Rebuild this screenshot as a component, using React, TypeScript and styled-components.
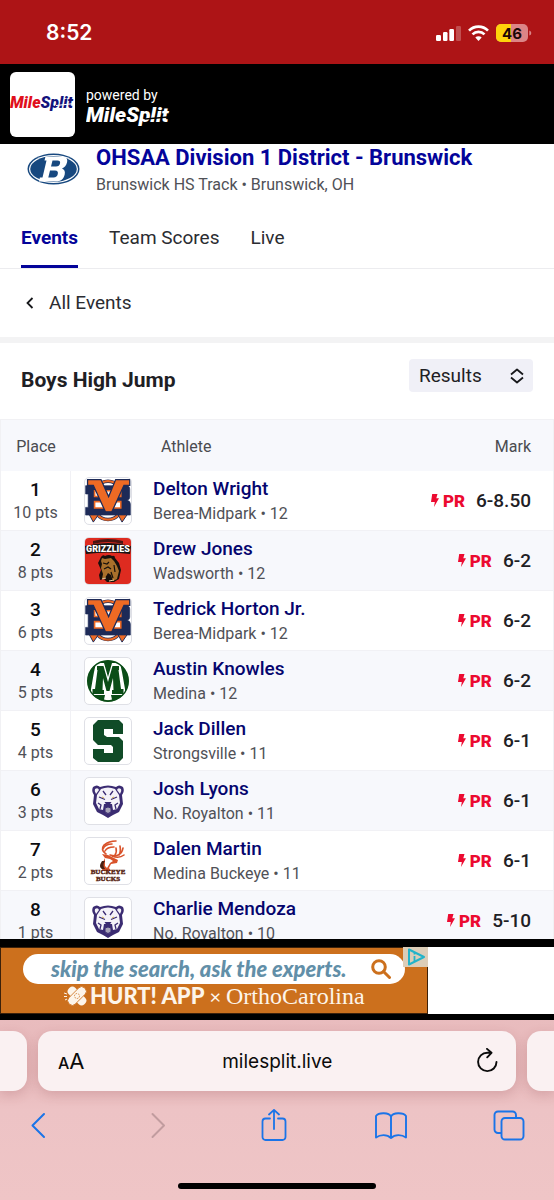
import React from "react";
import styled, { createGlobalStyle } from "styled-components";

const GlobalStyle = createGlobalStyle`
  * { box-sizing: border-box; }
  body { margin: 0; font-family: Roboto, sans-serif; color: #1e2024; background: #fff; }
  button, select, input { font: inherit; color: inherit; border: 0; background: none; padding: 0; margin: 0; }
  a { color: inherit; text-decoration: none; }
  svg { display: block; flex: none; }
  h1, h2, p { margin: 0; }
`;

const Shell = styled.div`
  display: flex;
  flex-direction: column;
  height: 100vh;
  overflow: hidden;
`;

const StatusBar = styled.div`
  display: flex;
  flex: none;
  align-items: center;
  justify-content: space-between;
  height: 64px;
  padding: 2px 22px 0 46px;
  background: #ad1416;
  color: #fff;
`;

const Clock = styled.time`
  font: 600 21px/24px Inter, sans-serif;
`;

const StatusIcons = styled.div`
  display: flex;
  align-items: center;
  gap: 7px;
`;

const BrandBar = styled.header`
  display: flex;
  flex: none;
  align-items: center;
  gap: 11px;
  height: 80px;
  padding: 0 10px;
  background: #000;
  color: #fff;
`;

const BrandTile = styled.a`
  display: flex;
  align-items: center;
  justify-content: center;
  width: 65px;
  height: 65px;
  border-radius: 6px;
  background: #fff;
`;

const BrandText = styled.div`
  display: flex;
  flex-direction: column;
  padding-top: 8px;
  font-size: 14px;
  line-height: 16px;
`;

const Content = styled.main`
  flex: 1;
  min-height: 0;
  overflow: hidden;
`;

const MeetHeader = styled.section`
  display: flex;
  gap: 16px;
  height: 64px;
  padding: 0 27px;
`;

const MeetCrest = styled.div`
  padding-top: 8px;
`;

const MeetTitle = styled.h1`
  font-size: 22px;
  line-height: 28px;
  font-weight: 700;
  color: #04049a;
  white-space: nowrap;
`;

const MeetPlace = styled.p`
  font-size: 16px;
  line-height: 26px;
  color: #505157;
`;

const Tabs = styled.nav`
  display: flex;
  gap: 31px;
  height: 61px;
  padding: 0 21px;
  border-bottom: 1px solid #ececef;
`;

const Tab = styled.a<{ $active?: boolean }>`
  height: 60px;
  padding-top: 18px;
  font-size: 19px;
  line-height: 24px;
  font-weight: ${(p) => (p.$active ? 700 : 400)};
  color: ${(p) => (p.$active ? "#04049a" : "#2b2c31")};
  border-bottom: 3px solid ${(p) => (p.$active ? "#04049a" : "transparent")};
`;

const BackLink = styled.a`
  display: flex;
  align-items: center;
  gap: 15px;
  height: 68px;
  padding: 0 26px;
  font-size: 19px;
  line-height: 24px;
  color: #2b2c31;
`;

const EventBar = styled.section`
  display: flex;
  justify-content: space-between;
  height: 83px;
  padding: 16px 21px 0;
  border-top: 6px solid #f3f3f4;
  border-bottom: 1px solid #f1f1f4;
`;

const EventTitle = styled.h2`
  padding-top: 9px;
  font-size: 21px;
  line-height: 24px;
  font-weight: 700;
`;

const SelectWrap = styled.div`
  position: relative;
  width: 124px;
  height: 33px;
`;

const ViewSelect = styled.select`
  appearance: none;
  width: 100%;
  height: 100%;
  padding: 0 10px;
  border-radius: 4px;
  background: #f0f0f7;
  font-size: 19px;
`;

const SelectArrows = styled.svg`
  position: absolute;
  right: 9px;
  top: 9px;
  pointer-events: none;
`;

const ResultsTable = styled.table`
  width: 100%;
  border-collapse: separate;
  border-spacing: 0;
  table-layout: fixed;
  border-left: 1px solid #f1f1f4;
  border-right: 1px solid #f1f1f4;
`;

const HeadCell = styled.th<{ $align?: string }>`
  height: 51px;
  padding: 2px 22px 0 8px;
  background: #f7f8fc;
  font-size: 16px;
  font-weight: 400;
  color: #4a4b50;
  text-align: ${(p) => p.$align ?? "left"};
`;

const PlaceHead = styled(HeadCell)`
  width: 70px;
  padding: 2px 0 0;
`;

const LogoHead = styled(HeadCell)`
  width: 82px;
`;

const MarkHead = styled(HeadCell)`
  width: 140px;
`;

const Row = styled.tr`
  background: #fff;
  &:nth-child(even) { background: #f7f8fc; }
`;

const Cell = styled.td`
  height: 60px;
  padding: 3px 0 0;
  border-bottom: 1px solid #f1f1f5;
`;

const PlaceCell = styled(Cell)`
  border-right: 1px solid #f1f1f5;
  text-align: center;
`;

const LogoCell = styled(Cell)`
  padding: 0 0 0 13px;
`;

const MarkCell = styled(Cell)`
  padding: 0 22px 0 0;
`;

const Place = styled.div`
  font-size: 19px;
  line-height: 22px;
  font-weight: 500;
  color: #0c0c0f;
`;

const Points = styled.div`
  font-size: 16px;
  line-height: 24px;
  color: #505157;
`;

const Athlete = styled.a`
  display: block;
  font-size: 19px;
  line-height: 24px;
  font-weight: 500;
  color: #05056e;
`;

const School = styled.div`
  font-size: 16px;
  line-height: 26px;
  color: #505157;
`;

const LogoFrame = styled.div`
  width: 48px;
  height: 48px;
  border: 1px solid #dfe0e6;
  border-radius: 5px;
  background: #fff;
  overflow: hidden;
`;

const Mark = styled.div`
  display: flex;
  align-items: center;
  justify-content: flex-end;
  font-size: 19px;
  line-height: 24px;
  font-weight: 500;
`;

const Record = styled.span`
  display: flex;
  align-items: center;
  gap: 4px;
  margin-right: 11px;
  font-size: 17px;
  font-weight: 900;
  color: #ec0a30;
`;

const AdStrip = styled.aside`
  flex: none;
  padding: 8px 0 6px;
  background: #000;
`;

const AdSlot = styled.div`
  display: flex;
  height: 67px;
  background: #fff;
`;

const AdBanner = styled.a`
  position: relative;
  display: flex;
  flex-direction: column;
  width: 428px;
  padding: 6px 22px 0;
  border: 1px solid #3c210a;
  background: #cc701d;
  white-space: nowrap;
`;

const AdSearch = styled.div`
  display: flex;
  align-items: center;
  justify-content: space-between;
  height: 30px;
  padding: 0 14px 0 28px;
  border-radius: 15px;
  background: #fff;
  font: italic 900 22px/26px Lato, sans-serif;
  color: #628fa8;
`;

const AdBrands = styled.div`
  display: flex;
  align-items: center;
  height: 24px;
  padding-left: 41px;
  color: #fdf5ea;
`;

const AdApp = styled.span`
  margin-left: 3px;
  font: 900 22px/24px Lato, sans-serif;
`;

const AdTimes = styled.span`
  margin: 0 5px;
  font: 400 20px/24px Lato, sans-serif;
`;

const AdPartner = styled.span`
  font: 400 24px/24px "Liberation Serif", serif;
`;

const AdChoices = styled.svg`
  position: absolute;
  top: -1px;
  right: -1px;
`;

const BrowserBar = styled.footer`
  flex: none;
  height: 180px;
  padding-top: 11px;
  background: linear-gradient(#e9bcbe, #e6b7b9 50px, #edc3c5 90px, #efc5c6);
`;

const AddressRow = styled.div`
  display: flex;
  gap: 11px;
`;

const TabStub = styled.div<{ $side: "left" | "right" }>`
  width: 27px;
  height: 60px;
  border-radius: ${(p) => (p.$side === "left" ? "0 14px 14px 0" : "14px 0 0 14px")};
  background: #faf1f2;
  box-shadow: 0 4px 12px rgba(120, 50, 55, 0.18);
`;

const AddressCard = styled.div`
  display: flex;
  flex: 1;
  min-width: 0;
  align-items: center;
  gap: 10px;
  height: 60px;
  padding: 2px 17px 0 20px;
  border-radius: 14px;
  background: #faf1f2;
  box-shadow: 0 4px 12px rgba(120, 50, 55, 0.18);
  color: #0b0b0b;
`;

const TextSizeButton = styled.button`
  display: flex;
  align-items: baseline;
  font: 500 16px/28px Inter, sans-serif;
`;

const BigA = styled.span`
  font-size: 22px;
  font-weight: 400;
`;

const Address = styled.input`
  flex: 1;
  min-width: 0;
  text-align: center;
  font: 400 19px/24px Inter, sans-serif;
`;

const ReloadButton = styled.button`
  display: flex;
  justify-content: flex-end;
  width: 29px;
`;

const ToolRow = styled.nav`
  display: flex;
  justify-content: space-between;
  padding: 18px 29px 0 22px;
`;

const ToolButton = styled.button`
  width: 32px;
  height: 32px;
  color: #1a74e8;
  &:disabled { color: #c19c9f; }
`;

const HomeIndicator = styled.div`
  width: 198px;
  height: 6px;
  margin: 42px auto 0;
  border-radius: 3px;
  background: #000;
`;

const logoFont = { fontFamily: "Roboto, sans-serif", fontWeight: 900, fontStyle: "italic" } as const;

function MileSplitTile() {
  return (
    <svg width="65" height="24" viewBox="0 0 65 24" role="img" aria-label="MileSplit">
      <text x="0" y="16" fontSize="16" style={logoFont}>
        <tspan fill="#e0101c">Mile</tspan>
        <tspan fill="#12127c">Split</tspan>
      </text>
      <path d="M46 13.500 65 11.500" stroke="#fff" strokeWidth="1" />
    </svg>
  );
}

function MileSplitWordmark() {
  return (
    <svg width="90" height="26" viewBox="0 0 90 26" role="img" aria-label="MileSplit">
      <text x="0" y="19" fontSize="21" fill="#fff" style={logoFont}>MileSplit</text>
      <path d="M59 16 88 13.500" stroke="#000" strokeWidth="1.400" />
    </svg>
  );
}

function BrunswickCrest() {
  return (
    <svg width="53" height="34" viewBox="0 0 53 34" aria-hidden="true">
      <ellipse cx="26.500" cy="17" rx="26" ry="15.500" fill="#17487f" />
      <ellipse cx="26.500" cy="17" rx="24.500" ry="14" fill="#fff" />
      <ellipse cx="26.500" cy="17" rx="23.300" ry="12.900" fill="#17487f" />
      <path fillRule="evenodd" fill="#fff" d="M18.500 4.500H34c5 0 7 2 6 6-.7 3-2.400 5-5 6 2.500 1 3.400 3 2.700 6-1 4.500-4 7-9 7H12l.9-4h2.600l4-17h-2zM25.500 8.500l-1.500 6h5c2.400 0 3.500-1 4-3 .5-2-.300-3-2.500-3zM23 18.500l-1.700 7h5.200c2.500 0 3.800-1.200 4.300-3.500.5-2.300-.3-3.500-2.800-3.500z" />
    </svg>
  );
}

function BereaLogo() {
  const navy = "#1d2a57";
  const orange = "#ee6a24";
  return (
    <svg width="46" height="46" viewBox="0 0 144 144" aria-hidden="true">
      <ellipse cx="72" cy="70" rx="50" ry="60" fill="none" stroke={navy} strokeWidth="11" />
      <ellipse cx="72" cy="70" rx="50" ry="60" fill="none" stroke={orange} strokeWidth="7" />
      <path d="M12 112h32l-18 26zM102 112h32l-18 26z" fill={orange} stroke={navy} strokeWidth="3" />
      <path fillRule="evenodd" fill={navy} stroke={navy} strokeWidth="2" d="M2 24H130q10 0 10 10v26q0 8-8 10 10 2 10 12v34H2V92h8V50H2zM30 40v18h82V40zM30 74v20h82V74z" />
      <path d="M30 40v18h82V40zM30 74v20h82V74z" fill="#fff" stroke={orange} strokeWidth="5" />
      <path d="M8 5H50L74 58 96 5H140V23H122L84 106H64L26 23H8z" fill={orange} stroke={navy} strokeWidth="4" />
    </svg>
  );
}

function GrizzliesLogo() {
  return (
    <svg width="46" height="46" viewBox="0 0 46 46" aria-hidden="true">
      <rect width="46" height="46" fill="#de2b20" />
      <path d="M8 3Q23-1 38 3V6Q23 2 8 6z" fill="#4a1512" />
      <path d="M0 8Q23 2 46 8L45 16Q23 13 1 16z" fill="#1b1413" />
      <text x="23" y="14" textAnchor="middle" fontSize="9" fill="#fff" style={{ fontFamily: "Roboto, sans-serif", fontWeight: 900 }}>GRIZZLIES</text>
      <path d="M16 19q2-3 4-1 4-2 7 0 3-1 3 2l4 5 2 7-2 9-5 3h-7l-3-3-4 1-1-5 2-5-3-7z" fill="#17100c" />
      <path d="M17 20l3 1 6-1 3 3 3 5 2 5-2 8-4 2-2-6-3-2-3 5-3 1 1-5-2-6 1-4-1-3z" fill="#a9702b" />
      <path d="M18 25l4 1 2-2M19 31l4-2 3 2M29 27l1 7M26 34l2 6" stroke="#17100c" strokeWidth="1.200" fill="none" />
      <path d="M17 41l4-1M24 43l5-1" stroke="#e8cf9e" strokeWidth="1" />
    </svg>
  );
}

function MedinaLogo() {
  return (
    <svg width="46" height="46" viewBox="0 0 46 46" aria-hidden="true">
      <circle cx="23" cy="23" r="20.500" fill="#0b4d17" />
      <path d="M11 5H19L23 19 27 5H35L37 14 40 31V37H26L27 41.500Q23 43 19 41.500L20 37H6V31L9 14z" fill="#fff" />
      <path d="M12 8H18.500L23 24 27.500 8H34V12H33.500L36 31H38.500V36H27V32H28.500L28 20 24.500 33H21.500L18 20 17.500 32H19V36H7.500V31H10L12.500 12H12z" fill="#0b4d17" />
      <circle cx="23" cy="23" r="20.300" fill="none" stroke="#0b4d17" strokeWidth="1.400" />
    </svg>
  );
}

function StrongsvilleLogo() {
  return (
    <svg width="46" height="46" viewBox="0 0 46 46" aria-hidden="true">
      <path d="M13 2H34L38 6V16H28V11H19V17L22 19H34L38 23V40L34 44H13L8 40V31H19V35H28V29L26 27H13L8 22V7z" fill="#104b27" />
    </svg>
  );
}

function RoyaltonLogo() {
  const ink = "#3b2c72";
  return (
    <svg width="46" height="46" viewBox="0 0 46 46" aria-hidden="true">
      <path d="M8 9q4-3 7 0 8-3 16 0 3-3 7 0 2 4-1 8l1 9-4 8-6 3-5 3-5-3-6-3-4-8 1-9q-3-4-1-8z" fill={ink} />
      <path d="M10 11q3-2 4 1l-3 4q-2-3-1-5zM36 11q-3-2-4 1l3 4q2-3 1-5z" fill="#f4f2f8" />
      <path d="M16 11q7-3 14 0l4 6 1 8-3 6-4 1-1-6H19l-1 6-4-1-3-6 1-8z" fill="#f4f2f8" />
      <path d="M14 19l6 2.500M32 19l-6 2.500M13 25l3 2-1 4M33 25l-3 2 1 4M18 13l3 4M28 13l-3 4M17 33l3 2M29 33l-3 2" stroke={ink} strokeWidth="1.300" fill="none" />
      <path d="M19.500 24h7l-2 3h-3z" fill={ink} />
      <path d="M20 30q3-2 6 0v4q-3 3-6 0z" fill="#a7a3b8" stroke={ink} />
      <path d="M17 19l2 1M29 19l-2 1" stroke="#d8b24a" strokeWidth="1" />
    </svg>
  );
}

function BuckeyeLogo() {
  return (
    <svg width="46" height="46" viewBox="0 0 46 46" aria-hidden="true">
      <g fill="none" stroke="#d9532b" strokeWidth="1.600" strokeLinecap="round">
        <path d="M21 16Q15 12 19 7 24 3 31 3M18 11Q20 6 27 6M20 13Q22 9 29 9" />
        <path d="M25 17Q36 20 38 10M30 17Q32 14 31 10M34 17Q36 14 35 8M27 18Q34 21 39 17" />
      </g>
      <path d="M17 16l6 1 4 2 6 3-1 3-6 1-2 4 2 3H18q-3-5 0-9l2-4z" fill="#d9532b" />
      <path d="M20 20l5 1 3 2-3 2-3 5-2-2z" fill="#fff" />
      <path d="M17 23q-4 6 0 8h3q-3-4 0-8z" fill="#4b2112" />
      <g fill="#571f12" stroke="#571f12" strokeWidth="0.400" textAnchor="middle" style={{ fontFamily: "'Liberation Serif', serif", fontWeight: 700 }}>
        <text x="23" y="36" fontSize="7">BUCKEYE</text>
        <text x="23" y="43" fontSize="7">BUCKS</text>
      </g>
    </svg>
  );
}

const results = [
  { place: 1, pts: 10, name: "Delton Wright", school: "Berea-Midpark", grade: 12, mark: "6-8.50", Logo: BereaLogo },
  { place: 2, pts: 8, name: "Drew Jones", school: "Wadsworth", grade: 12, mark: "6-2", Logo: GrizzliesLogo },
  { place: 3, pts: 6, name: "Tedrick Horton Jr.", school: "Berea-Midpark", grade: 12, mark: "6-2", Logo: BereaLogo },
  { place: 4, pts: 5, name: "Austin Knowles", school: "Medina", grade: 12, mark: "6-2", Logo: MedinaLogo },
  { place: 5, pts: 4, name: "Jack Dillen", school: "Strongsville", grade: 11, mark: "6-1", Logo: StrongsvilleLogo },
  { place: 6, pts: 3, name: "Josh Lyons", school: "No. Royalton", grade: 11, mark: "6-1", Logo: RoyaltonLogo },
  { place: 7, pts: 2, name: "Dalen Martin", school: "Medina Buckeye", grade: 11, mark: "6-1", Logo: BuckeyeLogo },
  { place: 8, pts: 1, name: "Charlie Mendoza", school: "No. Royalton", grade: 10, mark: "5-10", Logo: RoyaltonLogo },
];

function StatusGlyphs() {
  return (
    <StatusIcons>
      <svg width="25" height="16" viewBox="0 0 25 16" fill="#fff" aria-hidden="true">
        <rect x="0" y="10" width="5" height="6" rx="1.200" />
        <rect x="7" y="7" width="4.500" height="9" rx="1.200" />
        <rect x="13.300" y="4" width="4.700" height="12" rx="1.200" />
        <rect x="20" y="1" width="5" height="15" rx="1.200" opacity="0.250" />
      </svg>
      <svg width="21" height="16" viewBox="0 0 21 16" fill="none" stroke="#fff" strokeWidth="2.700" aria-hidden="true">
        <path d="M1 5.600a13.500 13.500 0 0 1 19 0" />
        <path d="M4.500 9.400a8.600 8.600 0 0 1 12 0" />
        <path d="M10.500 16 7.300 12.600a4.600 4.600 0 0 1 6.400 0z" fill="#fff" stroke="none" />
      </svg>
      <svg width="36" height="18" viewBox="0 0 36 18" role="img" aria-label="Battery 46 percent">
        <rect width="32" height="18" rx="5" fill="#dc8587" />
        <path d="M5 0h10v18H5a5 5 0 0 1-5-5V5a5 5 0 0 1 5-5z" fill="#fed30b" />
        <path d="M33.300 6.500q2 .5 2 2.500t-2 2.500z" fill="#dc8587" />
        <text x="16" y="14.500" textAnchor="middle" fontSize="15" fill="#1b0705" style={{ fontFamily: "Inter, sans-serif", fontWeight: 700 }}>46</text>
      </svg>
    </StatusIcons>
  );
}

function Bandage() {
  return (
    <svg width="23" height="20" viewBox="0 0 23 20" aria-hidden="true">
      <g fill="#fdf5ea">
        <rect x="2" y="5.500" width="22" height="9" rx="4" transform="rotate(45 13 10)" />
        <rect x="2" y="5.500" width="22" height="9" rx="4" transform="rotate(-45 13 10)" stroke="#cc701d" strokeWidth="0.800" />
      </g>
      <path d="M0 7l3 1M0 10.500h3M1 14l2-1" stroke="#fdf5ea" />
      <circle cx="13" cy="10" r="2.500" fill="none" stroke="#cc701d" strokeWidth="0.800" strokeDasharray="1.500 1" />
    </svg>
  );
}

export default function App() {
  return (
    <>
      <GlobalStyle />
      <Shell>
        <StatusBar>
          <Clock>8:52</Clock>
          <StatusGlyphs />
        </StatusBar>
        <BrandBar>
          <BrandTile href="#"><MileSplitTile /></BrandTile>
          <BrandText>
            powered by
            <MileSplitWordmark />
          </BrandText>
        </BrandBar>

        <Content>
          <MeetHeader>
            <MeetCrest><BrunswickCrest /></MeetCrest>
            <div>
              <MeetTitle>OHSAA Division 1 District - Brunswick</MeetTitle>
              <MeetPlace>Brunswick HS Track • Brunswick, OH</MeetPlace>
            </div>
          </MeetHeader>
          <Tabs>
            <Tab href="#events" $active>Events</Tab>
            <Tab href="#scores">Team Scores</Tab>
            <Tab href="#live">Live</Tab>
          </Tabs>
          <BackLink href="#all">
            <svg width="8" height="12" viewBox="0 0 8 12" fill="none" stroke="#17181b" strokeWidth="1.800" aria-hidden="true">
              <path d="M6.500 1 1.500 6l5 5" />
            </svg>
            All Events
          </BackLink>
          <EventBar>
            <EventTitle>Boys High Jump</EventTitle>
            <SelectWrap>
              <ViewSelect aria-label="View" defaultValue="Results">
                <option>Results</option>
              </ViewSelect>
              <SelectArrows width="14" height="16" viewBox="0 0 14 16" fill="none" stroke="#17181b" strokeWidth="1.800" strokeLinejoin="round">
                <path d="M1 6.500 7 1.500l6 5M1 9.500l6 5 6-5" />
              </SelectArrows>
            </SelectWrap>
          </EventBar>

          <ResultsTable>
            <thead>
              <tr>
                <PlaceHead $align="center">Place</PlaceHead>
                <LogoHead aria-label="Team" />
                <HeadCell>Athlete</HeadCell>
                <MarkHead $align="right">Mark</MarkHead>
              </tr>
            </thead>
            <tbody>
              {results.map(({ place, pts, name, school, grade, mark, Logo }) => (
                <Row key={place}>
                  <PlaceCell>
                    <Place>{place}</Place>
                    <Points>{pts} pts</Points>
                  </PlaceCell>
                  <LogoCell><LogoFrame><Logo /></LogoFrame></LogoCell>
                  <Cell>
                    <Athlete href="#athlete">{name}</Athlete>
                    <School>{school} • {grade}</School>
                  </Cell>
                  <MarkCell>
                    <Mark>
                      <Record>
                        <svg width="8" height="13" viewBox="0 0 8 13" fill="currentColor" aria-hidden="true">
                          <path d="M1.200 0h5.300L5.300 4.200H8L3 13l.8-5H0z" />
                        </svg>
                        PR
                      </Record>
                      {mark}
                    </Mark>
                  </MarkCell>
                </Row>
              ))}
            </tbody>
          </ResultsTable>
        </Content>

        <AdStrip>
          <AdSlot>
            <AdBanner href="#ad">
              <AdSearch>
                skip the search, ask the experts.
                <svg width="20" height="20" viewBox="0 0 20 20" fill="none" stroke="#cc701d" strokeWidth="3" aria-hidden="true">
                  <circle cx="8" cy="8" r="6.300" />
                  <path d="m12.500 12.500 6 6" strokeLinecap="round" />
                </svg>
              </AdSearch>
              <AdBrands>
                <Bandage />
                <AdApp>HURT! APP</AdApp>
                <AdTimes>×</AdTimes>
                <AdPartner>OrthoCarolina</AdPartner>
              </AdBrands>
              <AdChoices width="25" height="20" viewBox="0 0 25 20" aria-hidden="true">
                <rect width="25" height="20" fill="#dccdb8" />
                <path d="M6 2.500 21 10 6 17.500z" fill="none" stroke="#22b3c9" strokeWidth="2" strokeLinejoin="round" />
                <path d="M11.500 6v1.500M11.500 9v5" stroke="#22b3c9" strokeWidth="1.800" />
              </AdChoices>
            </AdBanner>
          </AdSlot>
        </AdStrip>

        <BrowserBar>
          <AddressRow>
            <TabStub $side="left" />
            <AddressCard>
              <TextSizeButton aria-label="Text size">A<BigA>A</BigA></TextSizeButton>
              <Address aria-label="Address" defaultValue="milesplit.live" />
              <ReloadButton aria-label="Reload">
                <svg width="24" height="28" viewBox="0 0 24 28" fill="none" stroke="#0b0b0b" strokeWidth="1.900" strokeLinecap="round" strokeLinejoin="round">
                  <path d="M21.500 14a9.200 9.200 0 1 1-9.200-9.300h4M12 .900 16.500 4.800l-4.300 4.500" />
                </svg>
              </ReloadButton>
            </AddressCard>
            <TabStub $side="right" />
          </AddressRow>
          <ToolRow aria-label="Browser tools">
            <ToolButton aria-label="Back">
              <svg width="32" height="32" viewBox="0 0 32 32" fill="none" stroke="currentColor" strokeWidth="2" strokeLinecap="round" strokeLinejoin="round"><path d="M22 5 10.500 16.500 22 28" /></svg>
            </ToolButton>
            <ToolButton aria-label="Forward" disabled>
              <svg width="32" height="32" viewBox="0 0 32 32" fill="none" stroke="currentColor" strokeWidth="2" strokeLinecap="round" strokeLinejoin="round"><path d="M12.500 5 24 16.500 12.500 28" /></svg>
            </ToolButton>
            <ToolButton aria-label="Share">
              <svg width="32" height="32" viewBox="0 0 32 32" fill="none" stroke="currentColor" strokeWidth="1.800" strokeLinecap="round" strokeLinejoin="round"><path d="M12 9.500H7.500a3 3 0 0 0-3 3V28a3 3 0 0 0 3 3h17a3 3 0 0 0 3-3V12.500a3 3 0 0 0-3-3H20M16 20V1M11 5.500 16 .900l5 4.600" /></svg>
            </ToolButton>
            <ToolButton aria-label="Bookmarks">
              <svg width="32" height="32" viewBox="0 0 32 32" fill="none" stroke="currentColor" strokeWidth="1.900" strokeLinecap="round" strokeLinejoin="round"><path d="M16 7.500C14 3.500 4 3 1 7V28.500C5 25.500 12 25 16 29 20 25 27 25.500 31 28.500V7C28 3 18 3.500 16 7.500V29" /></svg>
            </ToolButton>
            <ToolButton aria-label="Tabs">
              <svg width="32" height="32" viewBox="0 0 32 32" fill="none" stroke="currentColor" strokeWidth="1.900" strokeLinejoin="round"><rect x="8.500" y="9" width="22" height="21.500" rx="3.500" /><path d="M8 24H5a3.500 3.500 0 0 1-3.500-3.500V6A3.500 3.500 0 0 1 5 2.500H19.500A3.500 3.500 0 0 1 23 6v2.500" /></svg>
            </ToolButton>
          </ToolRow>
          <HomeIndicator />
        </BrowserBar>
      </Shell>
    </>
  );
}
